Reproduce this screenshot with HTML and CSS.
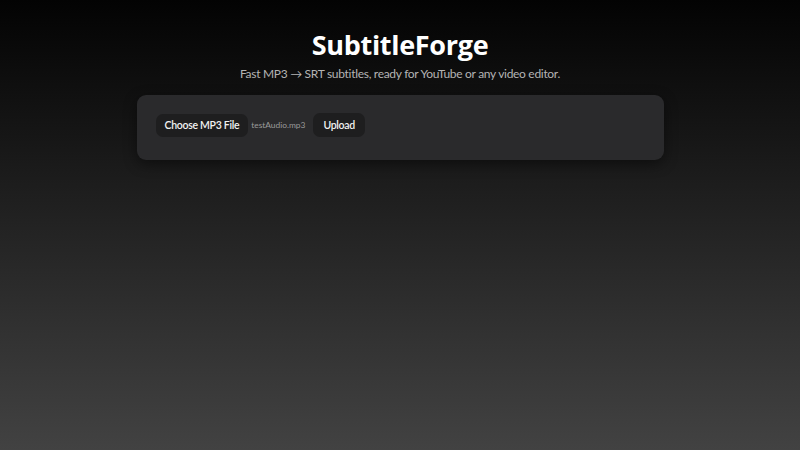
FILE: index.html
```html
<!DOCTYPE html>
<html>
<head>
<meta charset="utf-8">
<link rel="stylesheet" href="styles.css">
</head>
<body>
<main class="page">
  <h1 class="title">SubtitleForge</h1>
  <p class="subtitle">Fast MP3 → SRT subtitles, ready for YouTube or any video editor.</p>
  <section class="card">
    <div class="row">
      <button class="btn">Choose MP3 File</button>
      <span class="filename">testAudio.mp3</span>
      <button class="btn btn-upload">Upload</button>
    </div>
  </section>
</main>
</body>
</html>
```
FILE: styles.css
```css
html, body {
  margin: 0;
  height: 100%;
}
body {
  background: linear-gradient(to bottom, #030303 0%, #424242 100%);
  font-family: "Lato", "Open Sans", sans-serif;
  color: #fff;
}
.page {
  display: flex;
  flex-direction: column;
  align-items: center;
  padding-top: 27px;
}
.title {
  margin: 0;
  font-family: "Open Sans", sans-serif;
  font-size: 27px;
  font-weight: 700;
  line-height: 36px;
  letter-spacing: -0.3px;
}
.subtitle {
  margin: 2px 0 0;
  font-size: 12px;
  line-height: 18px;
  letter-spacing: -0.3px;
  color: #b4b4b4;
}
.card {
  margin-top: 12px;
  width: 527px;
  height: 65px;
  box-sizing: border-box;
  background: #2a2a2c;
  border-radius: 9px;
  box-shadow: 0 4px 14px rgba(0,0,0,0.45);
  padding: 18px 19px;
}
.row {
  display: flex;
  align-items: center;
  gap: 3px;
}
.btn {
  font-family: inherit;
  font-size: 10.5px;
  font-weight: 600;
  letter-spacing: -0.3px;
  color: #f2f2f2;
  background: #1e1e1f;
  border: none;
  border-radius: 7px;
  height: 23px;
  padding: 0 9px;
}
.btn-upload {
  margin-left: 5px;
  height: 24px;
  padding: 0 10px;
}
.filename {
  font-size: 8.4px;
  color: #9a9a9a;
}
```
